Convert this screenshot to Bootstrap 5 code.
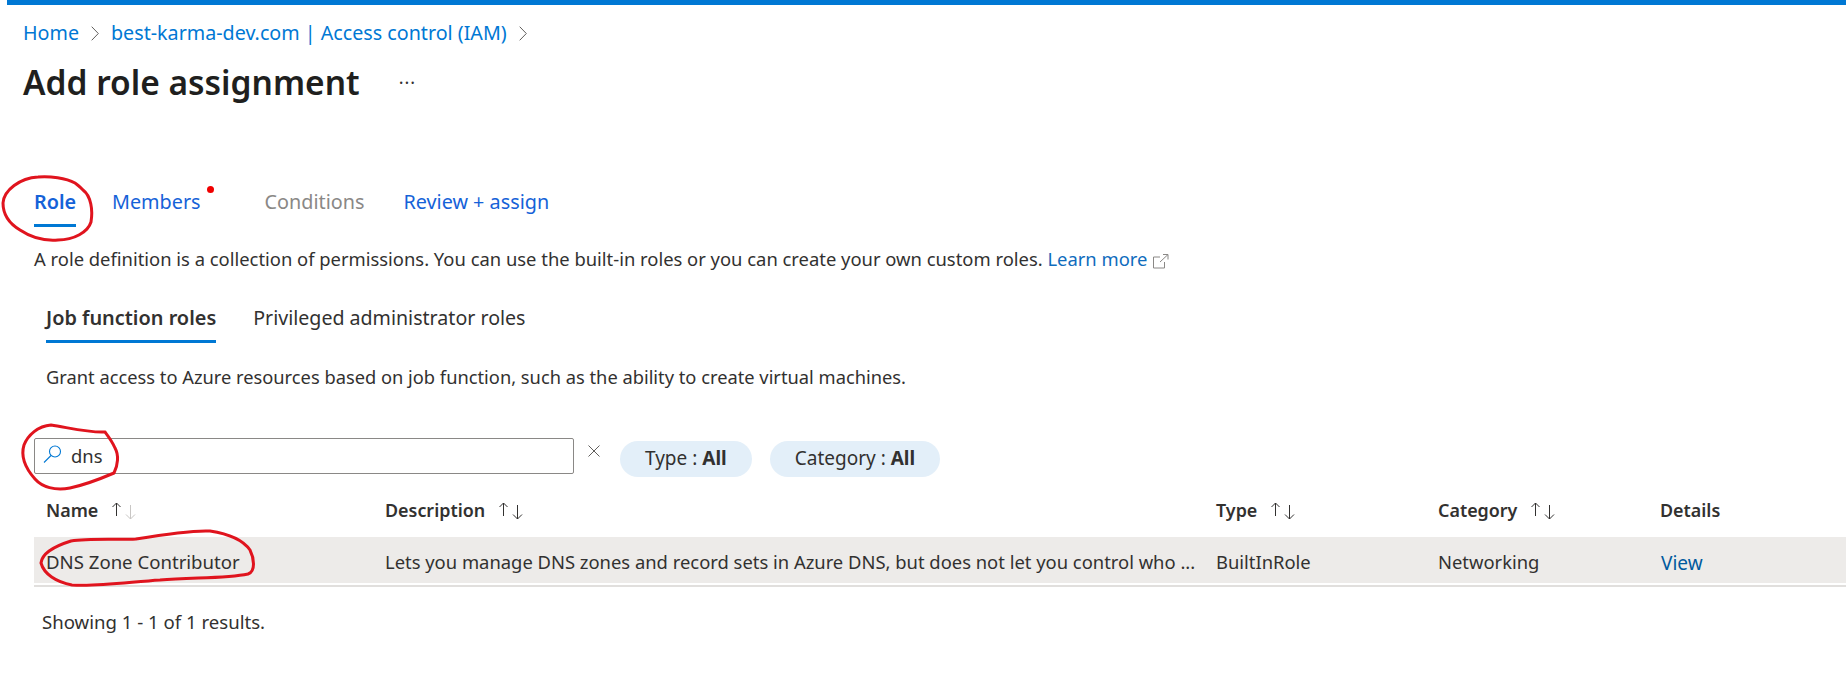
<!DOCTYPE html>
<html lang="en"><head><meta charset="utf-8"><title>Add role assignment</title>
<link href="https://cdn.jsdelivr.net/npm/bootstrap@5.3.0/dist/css/bootstrap.min.css" rel="stylesheet">
<style>
html,body{height:100%}
body{font-family:"Noto Sans","Open Sans",sans-serif;font-size:18.4px;line-height:24px;color:#323130;background:#fff;overflow:hidden}
a{text-decoration:none}
.page-wrap{position:relative;height:697px}
.top-strip{height:5px;margin-left:7px;background:#0078d4}
.crumbs{margin:16px 0 0 23px;padding:0;gap:0;font-size:19.7px;--bs-breadcrumb-margin-bottom:0}
.crumbs a{color:#0078d4}
.crumbs svg{margin:0 12px}
.page-title{margin:13px 0 0 23px;height:48px;align-items:center}
.page-title h1{font-size:33.5px;line-height:48px;font-weight:600;color:#201f1e;margin:0}
.page-title .more{margin-left:39px;color:#323130;font-size:18px;letter-spacing:1px;line-height:24px}
.wizard{margin:83px 0 0 34px;height:38px;font-size:19.8px;line-height:26px}
.wizard a,.wizard span.off{display:block;height:38px;color:#1562d8;position:relative}
.wizard .on{font-weight:600;border-bottom:3px solid #0078d4;width:42px;white-space:nowrap}
.wizard .off{color:#8a8886!important}
.red-dot{position:absolute;width:7px;height:7px;border-radius:50%;background:#f00000;right:-13px;top:-3px}
.intro{margin:20px 0 0 34px}
.intro a{color:#0f6cbd}
.subtabs{margin:35px 0 0 46px;height:37px;gap:37px;font-size:19.6px}
.subtabs span{display:block;height:37px;color:#323130}
.subtabs .on{font-weight:600;font-size:19.9px;border-bottom:3px solid #0078d4}
.grant{margin:22px 0 0 46px;font-size:18.3px}
.filters{margin:49px 0 0 34px;height:39px}
.searchbox{width:540px;height:36px;border:1px solid #8a8886;border-radius:2px;padding:0 8px;gap:9px}
.searchbox svg{margin-top:-4px}
.clear-x{margin:7px 20px 0 14px}
.chip{height:36px;margin-top:3px;border-radius:18px;background:#e3eff9;margin-right:18px;padding:0 25px;color:#323130;line-height:34px;font-size:19px}
.roles{margin:0 0 0 34px;width:1812px;table-layout:fixed;border-collapse:separate;border-spacing:0}
.roles th{height:60px;padding:21px 12px 15px;font-weight:600;line-height:24px;border:0;color:#323130;background:none;font-size:17.9px}
.roles td{height:46px;padding:3px 12px 0;background:#edebe9;color:#323130;border:0;vertical-align:middle;white-space:nowrap}
.roles td.role-name{font-size:18.6px}
.roles td a{color:#005a9e;position:relative;top:1px;font-size:19px;margin-left:1px}
.roles th svg{margin-left:13px;vertical-align:-3px}
.row-rule{height:2px;margin:2px 0 0 34px;background:#e1dfdd}
.results{margin:23px 0 0 42px;font-size:18.6px}
.ink{position:absolute;left:0;top:0;pointer-events:none}
</style></head><body>
<div class="page-wrap">
<div class="top-strip"></div>
<nav aria-label="breadcrumb"><ol class="breadcrumb crumbs align-items-center">
<li class="d-flex align-items-center"><a href="#">Home</a><svg width="8" height="15" viewBox="0 0 8 15"><path d="M.7.7l6.6 6.8L.7 14.3" fill="none" stroke="#605e5c"/></svg></li>
<li class="d-flex align-items-center"><a href="#">best-karma-dev.com | Access control (IAM)</a><svg width="8" height="15" viewBox="0 0 8 15"><path d="M.7.7l6.6 6.8L.7 14.3" fill="none" stroke="#605e5c"/></svg></li>
</ol></nav>
<div class="page-title d-flex"><h1>Add role assignment</h1><span class="more">···</span></div>
<div class="wizard d-flex">
<a href="#" class="on">Role</a>
<a href="#" style="margin-left:36px">Members<i class="red-dot"></i></a>
<span class="off" style="margin-left:64px">Conditions</span>
<a href="#" style="margin-left:39px">Review + assign</a>
</div>
<div class="intro">A role definition is a collection of permissions. You can use the built-in roles or you can create your own custom roles. <a href="#">Learn more</a> <svg width="17" height="15" viewBox="0 0 17 15"><path d="M8 3H1.500v11h11V8M8 8l8-7.500M11 .5h5v5" fill="none" stroke="#8a8886"/></svg></div>
<div class="subtabs d-flex"><span class="on">Job function roles</span><span>Privileged administrator roles</span></div>
<div class="grant">Grant access to Azure resources based on job function, such as the ability to create virtual machines.</div>
<div class="filters d-flex align-items-start">
<div class="searchbox d-flex align-items-center"><svg width="19" height="18" viewBox="0 0 19 18"><circle cx="12" cy="6.500" r="5.500" fill="none" stroke="#0078d4" stroke-width="1.100"/><path d="M8 10.500L1 17.500" stroke="#0078d4" stroke-width="1.100"/></svg><span>dns</span></div>
<svg class="clear-x" width="12" height="12" viewBox="0 0 12 12"><path d="M.5.5l11 11M11.500.5l-11 11" stroke="#605e5c"/></svg>
<div class="chip">Type : <b>All</b></div>
<div class="chip">Category : <b>All</b></div>
</div>
<table class="roles"><colgroup><col style="width:339px"><col style="width:831px"><col style="width:222px"><col style="width:222px"><col style="width:198px"></colgroup>
<thead><tr>
<th>Name<svg width="26" height="18" viewBox="0 0 26 18"><path d="M5.500 14V1M1.500 5l4-4 4 4" fill="none" stroke="#323130"/><path d="M19.500 3v14M15 12.500l4.500 4.500 4.500-4.500" fill="none" stroke="#c8c6c4"/></svg></th>
<th>Description<svg width="26" height="18" viewBox="0 0 26 18"><path d="M5.500 14V1M1.500 5l4-4 4 4" fill="none" stroke="#323130"/><path d="M19.500 3v14M15 12.500l4.500 4.500 4.500-4.500" fill="none" stroke="#323130"/></svg></th>
<th>Type<svg width="26" height="18" viewBox="0 0 26 18"><path d="M5.500 14V1M1.500 5l4-4 4 4" fill="none" stroke="#323130"/><path d="M19.500 3v14M15 12.500l4.500 4.500 4.500-4.500" fill="none" stroke="#323130"/></svg></th>
<th>Category<svg width="26" height="18" viewBox="0 0 26 18"><path d="M5.500 14V1M1.500 5l4-4 4 4" fill="none" stroke="#323130"/><path d="M19.500 3v14M15 12.500l4.500 4.500 4.500-4.500" fill="none" stroke="#323130"/></svg></th>
<th>Details</th>
</tr></thead>
<tbody><tr>
<td class="role-name">DNS Zone Contributor</td>
<td>Lets you manage DNS zones and record sets in Azure DNS, but does not let you control who ...</td>
<td>BuiltInRole</td><td>Networking</td><td><a href="#">View</a></td>
</tr></tbody></table>
<div class="row-rule"></div>
<div class="results">Showing 1 - 1 of 1 results.</div>
<svg class="ink" width="1846" height="697" viewBox="0 0 1846 697" fill="none" stroke="#e0141e" stroke-width="3" stroke-linecap="round" stroke-linejoin="round">
<path d="M75 183C66 178 50 176 38 177C20 178 4 190 3 203C3 216 10 224 20 230C32 238 46 241 58 240C74 240 88 232 91 222C93 210 91 196 83 190C80 187 78 185 75 183"/>
<path d="M105 432C90 433 70 428 51 425C38 426 28 435 24 445C20 458 27 470 35 479C42 487 55 491 70 488C84 485 100 479 114 473C118 465 119 455 115 448C112 441 108 436 105 432"/>
<path d="M136 539C118 540 90 538 71 541C55 546 42 553 41 563C44 574 56 582 72 585C95 587 130 582 160 580C190 577 225 579 248 574C256 571 254 558 250 550C243 540 230 534 210 531C190 530 160 535 136 539"/>
</svg>
</div>
</body></html>
